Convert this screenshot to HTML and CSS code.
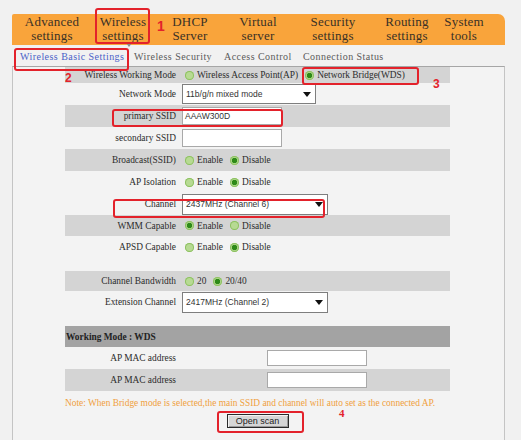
FILE: index.html
```html
<!DOCTYPE html>
<html>
<head>
<meta charset="utf-8">
<link rel="stylesheet" href="styles.css">
</head>
<body>
<div class="page">
  <div class="topnav">
    <div class="nav-item n1">Advanced<br>settings</div>
    <div class="nav-item n2">Wireless<br>settings</div>
    <div class="nav-item n3">DHCP<br>Server</div>
    <div class="nav-item n4">Virtual<br>server</div>
    <div class="nav-item n5">Security<br>settings</div>
    <div class="nav-item n6">Routing<br>settings</div>
    <div class="nav-item n7">System<br>tools</div>
  </div>
  <div class="tabs">
    <span class="tab t1 active">Wireless Basic Settings</span>
    <span class="tab t2">Wireless Security</span>
    <span class="tab t3">Access Control</span>
    <span class="tab t4">Connection Status</span>
  </div>
  <div class="panel">
    <div class="form">
      <div class="row alt first">
        <div class="lbl">Wireless Working Mode</div>
        <div class="val radios">
          <span class="opt"><i class="radio"></i>Wireless Access Point(AP)</span>
          <span class="opt"><i class="radio on"></i>Network Bridge(WDS)</span>
        </div>
      </div>
      <div class="row">
        <div class="lbl">Network Mode</div>
        <div class="val">
          <div class="select sel-mode">11b/g/n mixed mode<svg class="arrow" width="8" height="5" viewBox="0 0 8 5"><path d="M0 0H8L4 5Z" fill="#111"/></svg></div>
        </div>
      </div>
      <div class="row alt">
        <div class="lbl">primary SSID</div>
        <div class="val"><div class="text">AAAW300D</div></div>
      </div>
      <div class="row">
        <div class="lbl">secondary SSID</div>
        <div class="val"><div class="text"></div></div>
      </div>
      <div class="row alt">
        <div class="lbl">Broadcast(SSID)</div>
        <div class="val radios">
          <span class="opt"><i class="radio"></i>Enable</span>
          <span class="opt"><i class="radio on"></i>Disable</span>
        </div>
      </div>
      <div class="row">
        <div class="lbl">AP Isolation</div>
        <div class="val radios">
          <span class="opt"><i class="radio"></i>Enable</span>
          <span class="opt"><i class="radio on"></i>Disable</span>
        </div>
      </div>
      <div class="row">
        <div class="lbl">Channel</div>
        <div class="val">
          <div class="select sel-wide">2437MHz (Channel 6)<svg class="arrow" width="8" height="5" viewBox="0 0 8 5"><path d="M0 0H8L4 5Z" fill="#111"/></svg></div>
        </div>
      </div>
      <div class="row alt h21">
        <div class="lbl">WMM Capable</div>
        <div class="val radios">
          <span class="opt"><i class="radio on"></i>Enable</span>
          <span class="opt"><i class="radio"></i>Disable</span>
        </div>
      </div>
      <div class="row">
        <div class="lbl">APSD Capable</div>
        <div class="val radios">
          <span class="opt"><i class="radio"></i>Enable</span>
          <span class="opt"><i class="radio on"></i>Disable</span>
        </div>
      </div>
      <div class="spacer"></div>
      <div class="row alt h20">
        <div class="lbl">Channel Bandwidth</div>
        <div class="val radios">
          <span class="opt"><i class="radio"></i>20</span>
          <span class="opt"><i class="radio on"></i>20/40</span>
        </div>
      </div>
      <div class="row">
        <div class="lbl">Extension Channel</div>
        <div class="val">
          <div class="select sel-wide">2417MHz (Channel 2)<svg class="arrow" width="8" height="5" viewBox="0 0 8 5"><path d="M0 0H8L4 5Z" fill="#111"/></svg></div>
        </div>
      </div>
      <div class="spacer"></div>
      <div class="row head h21">Working Mode : WDS</div>
      <div class="row">
        <div class="lbl">AP MAC address</div>
        <div class="val mac"><div class="text short"></div></div>
      </div>
      <div class="row alt">
        <div class="lbl">AP MAC address</div>
        <div class="val mac"><div class="text short"></div></div>
      </div>
      <div class="note">Note: When Bridge mode is selected,the main SSID and channel will auto set as the connected AP.</div>
      <div class="actions"><button class="btn">Open scan</button></div>
    </div>
  </div>

  <div class="mark m1"></div>
  <div class="num n-1">1</div>
  <div class="mark m2"></div>
  <div class="num n-2">2</div>
  <div class="mark m3"></div>
  <div class="num n-3">3</div>
  <div class="mark m4"></div>
  <div class="mark m5"></div>
  <div class="mark m6"></div>
  <div class="num n-4">4</div>
</div>
</body>
</html>
```
FILE: styles.css
```css
html, body {
  margin: 0;
  padding: 0;
  background: #f1f1f1;
}
.page {
  position: relative;
  width: 521px;
  height: 440px;
  padding: 14px 0 0 12px;
  box-sizing: border-box;
  overflow: hidden;
}
.topnav {
  width: 493px;
  height: 31px;
  background: #f9a43b;
  border-radius: 2px 7px 0 0;
  display: flex;
  padding-left: 5px;
  box-sizing: border-box;
}
.nav-item {
  font-family: "Liberation Serif", serif;
  font-size: 13px;
  line-height: 14px;
  color: #3a3126;
  text-align: center;
  padding-top: 1px;
  white-space: nowrap;
  letter-spacing: 0.2px;
}
.n1 { width: 70px; }
.n2 { width: 72px; }
.n3 { width: 62px; }
.n4 { width: 74px; }
.n5 { width: 76px; }
.n6 { width: 72px; }
.n7 { width: 42px; }

.tabs {
  height: 21px;
  display: flex;
  align-items: center;
  padding-left: 8px;
  padding-top: 1px;
  box-sizing: border-box;
}
.tab {
  font-family: "Liberation Serif", serif;
  font-size: 10px;
  letter-spacing: 0.45px;
  color: #5a5a5a;
  white-space: nowrap;
  position: relative;
}
.tab.active { color: #4a61c8; }
.tab.active::after {
  content: "";
  position: absolute;
  right: 2px;
  top: -8px;
  border-left: 3px solid transparent;
  border-right: 3px solid transparent;
  border-top: 4px solid #8a8a8a;
}
.t1 { width: 114px; }
.t2 { width: 90px; }
.t3 { width: 79px; }

.panel {
  width: 493px;
  height: 374px;
  background: #f3f3f3;
  border-top: 1px solid #a6a6a6;
  border-left: 1px solid #c4c4c4;
  border-right: 1px solid #c4c4c4;
  box-sizing: border-box;
}
.form {
  width: 385px;
  margin-left: 52px;
}
.row {
  display: flex;
  align-items: center;
  height: 22px;
}
.row.first { height: 16px; }
.row.h21 { height: 21px; }
.row.h20 { height: 20px; }
.row.alt { background: #d4d4d4; }
.spacer { height: 13px; }
.lbl {
  width: 117px;
  flex: none;
  text-align: right;
  padding-right: 6px;
  box-sizing: border-box;
  font-family: "Liberation Serif", serif;
  font-size: 9.4px;
  color: #2c2c2c;
  white-space: nowrap;
}
.val {
  display: flex;
  align-items: center;
  font-family: "Liberation Serif", serif;
  font-size: 9.4px;
  color: #2c2c2c;
  white-space: nowrap;
}
.val.radios { padding-left: 3px; }
.val.mac { padding-left: 85px; }
.opt {
  display: inline-flex;
  align-items: center;
  margin-right: 7px;
}
.radio {
  display: inline-block;
  width: 9px;
  height: 9px;
  border-radius: 50%;
  background: #b7da93;
  box-shadow: inset 0 0 0 1px #8dc061;
  margin-right: 3px;
  flex: none;
}
.radio.on {
  background: radial-gradient(circle, #2e8a18 0, #2e8a18 2.4px, #acd688 3px);
}
.select {
  position: relative;
  height: 20px;
  background: #fff;
  border: 1px solid #7e7e7e;
  box-sizing: border-box;
  display: flex;
  align-items: center;
  padding-left: 3px;
  font-family: "Liberation Sans", sans-serif;
  font-size: 8.5px;
  color: #333;
}
.sel-mode { width: 134px; }
.sel-wide { width: 146px; height: 21px; }
.arrow {
  position: absolute;
  right: 4px;
  top: 7px;
}
.text {
  width: 100px;
  height: 18px;
  background: #fff;
  border: 1px solid #a9a9a9;
  box-sizing: border-box;
  padding-left: 2px;
  display: flex;
  align-items: center;
  font-family: "Liberation Sans", sans-serif;
  font-size: 8.5px;
  color: #333;
}
.text.short { height: 16px; }
.row.head {
  background: #a3a3a3;
  font-family: "Liberation Serif", serif;
  font-size: 9.4px;
  font-weight: bold;
  color: #222;
  padding-left: 1px;
}
.note {
  height: 23px;
  padding-top: 7px;
  box-sizing: border-box;
  line-height: 11px;
  font-family: "Liberation Serif", serif;
  font-size: 9.4px;
  color: #f0a040;
  white-space: nowrap;
}
.actions {
  display: flex;
  justify-content: center;
}
.btn {
  width: 62px;
  height: 14px;
  margin: 0;
  padding: 0;
  background: #d6d6d6;
  border: 1px solid #2a2a2a;
  box-shadow: inset 1px 1px 0 #f4f4f4, inset -1px -1px 0 #9a9a9a;
  font-family: "Liberation Sans", sans-serif;
  font-size: 9px;
  line-height: 12px;
  color: #222;
}

.mark {
  position: absolute;
  border: 2px solid #e3222b;
  border-radius: 3px;
  box-sizing: border-box;
}
.m1 { left: 95px; top: 8px; width: 55px; height: 36px; }
.m2 { left: 14px; top: 48px; width: 115px; height: 23px; }
.m3 { left: 302px; top: 67px; width: 117px; height: 18px; }
.m4 { left: 112px; top: 109px; width: 171px; height: 18px; }
.m5 { left: 113px; top: 199px; width: 212px; height: 19px; }
.m6 { left: 217px; top: 411px; width: 87px; height: 22px; }
.num {
  position: absolute;
  font-family: "Liberation Sans", sans-serif;
  font-weight: bold;
  color: #e3222b;
}
.n-1 { left: 157px; top: 18px; font-size: 14px; }
.n-2 { left: 65px; top: 71px; font-size: 12px; }
.n-3 { left: 433px; top: 77px; font-size: 12px; }
.n-4 { left: 339px; top: 408px; font-size: 11px; line-height: 10px; font-family: "Liberation Serif", serif; }
```
